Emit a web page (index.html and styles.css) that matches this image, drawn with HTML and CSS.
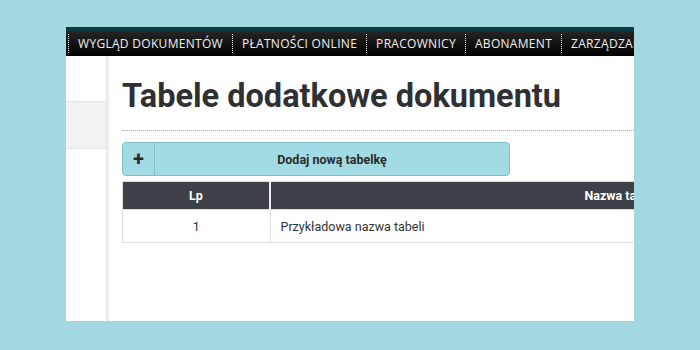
FILE: index.html
```html
<!DOCTYPE html>
<html lang="pl">
<head>
<meta charset="utf-8">
<link rel="stylesheet" href="styles.css">
</head>
<body>
<div class="window">
  <div class="topstrip"></div>
  <nav class="nav">
    <span class="nav-item">WYGLĄD DOKUMENTÓW</span>
    <span class="nav-item">PŁATNOŚCI ONLINE</span>
    <span class="nav-item">PRACOWNICY</span>
    <span class="nav-item">ABONAMENT</span>
    <span class="nav-item">ZARZĄDZANIE</span>
  </nav>
  <div class="main">
    <aside class="sidebar">
      <div class="side-band"></div>
    </aside>
    <div class="shadow"></div>
    <section class="content">
      <h1 class="title">Tabele dodatkowe dokumentu</h1>
      <div class="rule"></div>
      <button class="add-btn"><span class="plus">+</span><span class="add-label">Dodaj nową tabelkę</span></button>
      <table class="tbl">
        <thead>
          <tr><th class="col-lp">Lp</th><th class="col-name">Nazwa tabeli</th></tr>
        </thead>
        <tbody>
          <tr><td class="col-lp">1</td><td class="name-cell">Przykładowa nazwa tabeli</td></tr>
        </tbody>
      </table>
    </section>
  </div>
</div>
</body>
</html>
```

FILE: styles.css
```css
html, body {
  margin: 0;
  padding: 0;
}
body {
  background: #a3d7e1;
  width: 700px;
  height: 350px;
  overflow: hidden;
  padding: 27px 0 0 66px;
  box-sizing: border-box;
  font-family: Roboto, "Liberation Sans", sans-serif;
}
.window {
  width: 568px;
  height: 294px;
  background: #fff;
  overflow: hidden;
  display: flex;
  flex-direction: column;
}
.topstrip {
  height: 4px;
  background: #0b3a42;
  flex: none;
}
.nav {
  height: 25px;
  flex: none;
  background: linear-gradient(#262626, #000);
  display: flex;
  align-items: center;
  white-space: nowrap;
  padding-left: 2px;
}
.nav-item {
  font-family: "Open Sans", Lato, sans-serif;
  font-size: 12px;
  color: #f0f0f0;
  letter-spacing: 0.3px;
  padding: 0 9px 0 9px;
  border-left: 1px dotted #fff;
  line-height: 19px;
}
.main {
  flex: 1;
  display: flex;
  min-height: 0;
}
.sidebar {
  width: 40px;
  flex: none;
  padding-top: 45px;
}
.side-band {
  height: 46px;
  background: #f2f2f2;
  border-top: 1px solid #e6e6e6;
  border-bottom: 1px solid #e6e6e6;
}
.shadow {
  width: 5px;
  flex: none;
  background: linear-gradient(to right, #e4e4e4, #f7f7f7 70%, #fff);
}
.content {
  flex: 1;
  padding-left: 11px;
  min-width: 0;
}
.title {
  margin: 20px 0 0 0;
  font-family: Roboto, sans-serif;
  font-weight: 700;
  font-size: 32.5px;
  line-height: 40px;
  color: #2e3033;
  white-space: nowrap;
}
.rule {
  margin-top: 14px;
  border-top: 1px dotted #a8a8a8;
  width: 560px;
}
.add-btn {
  margin-top: 11px;
  width: 388px;
  height: 34px;
  padding: 0;
  display: flex;
  align-items: stretch;
  background: #a3dbe5;
  border: 1px solid #80bcc7;
  border-radius: 4px;
  font-family: Roboto, sans-serif;
  color: #2b2b2b;
  cursor: pointer;
}
.plus {
  width: 31px;
  flex: none;
  border-right: 1px solid #80bcc7;
  display: flex;
  align-items: center;
  justify-content: center;
  font-size: 20px;
  font-weight: 700;
}
.add-label {
  flex: 1;
  display: flex;
  align-items: center;
  justify-content: center;
  font-size: 12.5px;
  font-weight: 700;
}
.tbl {
  margin-top: 5px;
  border-collapse: collapse;
  width: 850px;
  font-family: Roboto, sans-serif;
  font-size: 12.5px;
}
.tbl th {
  background: #3d4046;
  color: #fff;
  font-weight: 700;
  font-size: 12.5px;
  height: 27px;
  padding: 0;
  border: 1px solid #ddd;
  border-right: 2px solid #ebebeb;
  text-align: center;
}
.col-lp {
  width: 146px;
}
.tbl td {
  height: 32px;
  border: 1px solid #ddd;
  color: #333;
  padding: 0;
}
.tbl td.col-lp {
  text-align: center;
}
.tbl td.name-cell {
  padding-left: 10px;
}
```
